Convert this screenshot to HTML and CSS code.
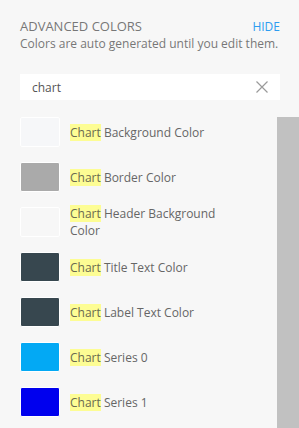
FILE: index.html
```html
<!DOCTYPE html>
<html lang="en">
<head>
  <meta charset="UTF-8">
  <title>Advanced Colors</title>
  <link rel="stylesheet" href="styles.css">
</head>
<body>
  <div class="panel">
    <div class="head">
      <span class="title">ADVANCED COLORS</span>
      <a class="hide" href="#">HIDE</a>
    </div>
    <p class="hint">Colors are auto generated until you edit them.</p>
    <div class="search">
      <span class="query">chart</span>
      <svg class="clear" width="12" height="12" viewBox="0 0 12 12">
        <path d="M0.5 0.5 L11.5 11.5 M11.5 0.5 L0.5 11.5" stroke="#9a9a9a" stroke-width="1.2" fill="none"/>
      </svg>
    </div>
  </div>
  <div class="list-wrap">
    <ul class="list">
      <li class="row"><span class="swatch" style="background:#f6f7f9"></span><span class="label"><mark>Chart</mark> Background Color</span></li>
      <li class="row"><span class="swatch" style="background:#aaaaaa"></span><span class="label"><mark>Chart</mark> Border Color</span></li>
      <li class="row"><span class="swatch" style="background:#f7f7f7"></span><span class="label"><mark>Chart</mark> Header Background Color</span></li>
      <li class="row"><span class="swatch" style="background:#37474f"></span><span class="label"><mark>Chart</mark> Title Text Color</span></li>
      <li class="row"><span class="swatch" style="background:#37474f"></span><span class="label"><mark>Chart</mark> Label Text Color</span></li>
      <li class="row"><span class="swatch" style="background:#03a9f4"></span><span class="label"><mark>Chart</mark> Series 0</span></li>
      <li class="row"><span class="swatch" style="background:#0000ee"></span><span class="label"><mark>Chart</mark> Series 1</span></li>
    </ul>
    <div class="scrollbar"></div>
  </div>
</body>
</html>
```

FILE: styles.css
```css
body {
  margin: 0;
  background-color: #f7f7f7;
  font-family: "Open Sans", "Liberation Sans", sans-serif;
  color: #666;
  overflow: hidden;
}
.panel {
  padding: 17px 19px 0 20px;
}
.head {
  display: flex;
  justify-content: space-between;
  align-items: baseline;
  line-height: 18px;
}
.title {
  font-size: 13px;
  color: #777;
}
.hide {
  font-size: 12px;
  color: #2d9cf0;
  text-decoration: none;
}
.hint {
  margin: 0;
  font-size: 12px;
  line-height: 16px;
  color: #777;
}
.search {
  margin-top: 22px;
  height: 26px;
  background-color: #fff;
  display: flex;
  align-items: center;
  justify-content: space-between;
  padding: 0 12px;
}
.query {
  font-size: 12px;
  color: #555;
}
.clear {
  display: block;
}
.list-wrap {
  display: flex;
  margin-top: 17px;
}
.list {
  list-style: none;
  margin: 0;
  padding: 0 0 0 20px;
  flex: 1;
}
.row {
  display: flex;
  align-items: center;
  gap: 10px;
  height: 30px;
  margin-bottom: 15px;
}
.swatch {
  width: 38px;
  height: 28px;
  border: 1px solid #fff;
  border-radius: 2px;
  flex-shrink: 0;
}
.label {
  font-size: 12px;
  line-height: 17px;
  max-width: 165px;
  color: #666;
}
mark {
  background-color: #fdfd94;
  color: #6a6a50;
}
.scrollbar {
  width: 22px;
  height: 320px;
  background-color: #c1c1c1;
}
```
